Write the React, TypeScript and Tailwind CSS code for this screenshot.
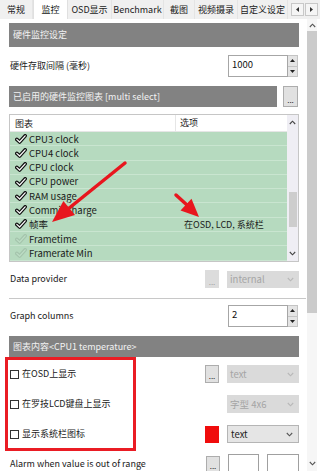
import React from "react";

const Chev = ({ dir = "down", className = "" }: { dir?: "up" | "down"; className?: string }) => (
  <svg width="7" height="5" viewBox="0 0 7 5" className={className}>
    <polyline
      points={dir === "down" ? "0.8,1 3.5,3.8 6.2,1" : "0.8,4 3.5,1.2 6.2,4"}
      fill="none"
      stroke="currentColor"
      strokeWidth="1.1"
    />
  </svg>
);

const Tri = ({ up }: { up?: boolean }) => (
  <svg width="5" height="3" viewBox="0 0 5 3">
    <polygon points={up ? "0,3 2.5,0 5,3" : "0,0 2.5,3 5,0"} fill="#222" />
  </svg>
);

const Check = ({ faint }: { faint?: boolean }) => (
  <svg width="12" height="10" viewBox="0 0 12 10" className={faint ? "opacity-10" : ""}>
    <path d="M1.8 5.4 L4.6 8 L10.2 1.8" fill="none" stroke="#111" strokeWidth="3.6" strokeLinecap="round" strokeLinejoin="round" />
    <path d="M1.8 5.4 L4.6 8 L10.2 1.8" fill="none" stroke="#fff" strokeWidth="1.2" strokeLinecap="round" strokeLinejoin="round" />
  </svg>
);

const Spin = ({ value }: { value: string }) => (
  <div className="flex h-[22px] mr-[1px]">
    <div className="w-[60px] border border-[#a6a6a6] bg-white pl-[3px] pt-[2px] text-[9.5px] leading-[12px] text-[#111]">{value}</div>
    <div className="flex w-[10px] flex-col">
      <div className="flex flex-1 items-center justify-center border border-l-0 border-[#c4c4c4] bg-[#e4e4e4]">
        <Tri up />
      </div>
      <div className="flex flex-1 items-center justify-center border border-l-0 border-t-0 border-[#c4c4c4] bg-[#e4e4e4]">
        <Tri />
      </div>
    </div>
  </div>
);

const Header = ({ children, className = "" }: { children: React.ReactNode; className?: string }) => (
  <div className={`flex items-center bg-[#828282] pl-[4px] text-[9px] text-[#f2f2f2] ${className}`}>{children}</div>
);

const Dots = ({ disabled, className = "" }: { disabled?: boolean; className?: string }) => (
  <div
    className={`flex w-[14px] items-end justify-center pb-[3px] text-[8px] leading-[6px] ${
      disabled ? "bg-[#dcdcdc] text-[#a0a0a0]" : "border border-[#adadad] bg-[#e1e1e1] text-[#222]"
    } ${className}`}
  >
    ...
  </div>
);

const Select = ({ text, disabled, className = "" }: { text: string; disabled?: boolean; className?: string }) => (
  <div
    className={`flex w-[72px] items-center justify-between pl-[3px] pr-[5px] text-[9.5px] ${
      disabled ? "bg-[#dadada] text-[#a5a5a5]" : "border border-[#b5b5b5] bg-[#e5e5e5] text-[#222]"
    } ${className}`}
  >
    <span>{text}</span>
    <Chev className={disabled ? "text-[#b8b8b8]" : "text-[#555]"} />
  </div>
);

const rows: { name: string; checked: boolean; opt?: string }[] = [
  { name: "CPU3 clock", checked: true },
  { name: "CPU4 clock", checked: true },
  { name: "CPU clock", checked: true },
  { name: "CPU power", checked: true },
  { name: "RAM usage", checked: true },
  { name: "Commit charge", checked: true },
  { name: "帧率", checked: true, opt: "在OSD, LCD, 系统栏" },
  { name: "Frametime", checked: false },
  { name: "Framerate Min", checked: false },
];

const tabs: { label: string; w: string; active?: boolean }[] = [
  { label: "常规", w: "w-[33px]" },
  { label: "监控", w: "w-[35px]", active: true },
  { label: "OSD显示", w: "w-[44px]" },
  { label: "Benchmark", w: "w-[52px]" },
  { label: "截图", w: "w-[31px]" },
  { label: "视频摄录", w: "w-[43px]" },
  { label: "自定义设定", w: "w-[50px]" },
];

const Cb = () => <div className="h-[9px] w-[9px] border border-[#333] bg-white" />;

export default function App() {
  return (
    <div className="relative h-[471px] w-[320px] overflow-hidden bg-white font-['Noto_Sans_CJK_SC','Noto_Sans',sans-serif] text-[#1a1a1a]">
      {/* Tab bar */}
      <div className="flex h-[19px] bg-[#f0f0f0]">
        {tabs.map((t) => (
          <div
            key={t.label}
            className={`flex ${t.w} items-center justify-center text-[9px] ${
              t.active ? "border-x border-[#e0e0e0] bg-white text-[#111]" : "border-r border-[#e4e4e4] text-[#222]"
            }`}
          >
            {t.label}
          </div>
        ))}
        <div className="ml-[3px] mt-[3px] flex h-[13px] gap-[1px]">
          <div className="flex w-[13px] items-center justify-center border border-[#c8c8c8] bg-[#f5f5f5]">
            <svg width="3" height="5" viewBox="0 0 3 5"><polygon points="3,0 0,2.5 3,5" fill="#333" /></svg>
          </div>
          <div className="flex w-[13px] items-center justify-center border border-[#c8c8c8] bg-[#f5f5f5]">
            <svg width="3" height="5" viewBox="0 0 3 5"><polygon points="0,0 3,2.5 0,5" fill="#333" /></svg>
          </div>
        </div>
      </div>

      {/* Body */}
      <div className="flex">
        <div className="w-[307px] pl-[9px] pr-[8px] pt-[4px]">
          <Header className="h-[24px]">硬件监控设定</Header>

          <div className="mt-[8px] flex items-center justify-between">
            <span className="pl-[1px] text-[9px]">硬件存取间隔 (毫秒)</span>
            <Spin value="1000" />
          </div>

          <div className="mt-[9px] flex h-[21px] gap-[6px]">
            <Header className="h-full flex-1">已启用的硬件监控图表 [multi select]</Header>
            <Dots className="mr-[1px] w-[15px]" />
          </div>

          {/* List */}
          <div className="mt-[7px] flex h-[148px] border border-[#c6c6c6]">
            <div className="flex flex-1 flex-col">
              <div className="flex h-[17px] shrink-0 items-center border-b border-[#e6e6e6] bg-white text-[9px]">
                <div className="w-[166px] border-r border-[#e6e6e6] pl-[5px] leading-[17px]">图表</div>
                <div className="pl-[4px]">选项</div>
              </div>
              <div className="flex flex-1 flex-col bg-[#b6dabf]">
                {rows.map((r) => (
                  <div key={r.name} className="flex h-[14.3px] items-center border-b border-[#c9e5d0] text-[9.5px]">
                    <div className="flex w-[19px] justify-center pl-[2px]">
                      <Check faint={!r.checked} />
                    </div>
                    <div className="w-[155px] text-[#1a1a1a]">{r.name}</div>
                    {r.opt && <div className="text-[9px]">{r.opt}</div>}
                  </div>
                ))}
              </div>
            </div>
            <div className="flex w-[11px] flex-col items-center bg-[#efeef4]">
              <Chev dir="up" className="mt-[5px] text-[#444]" />
              <div className="mt-[67px] h-[35px] w-[8px] bg-[#cdcdcd]" />
              <Chev className="mt-[24px] text-[#444]" />
            </div>
          </div>

          <div className="mt-[8px] flex h-[18px] items-center">
            <span className="flex-1 pl-[1px] text-[9px]">Data provider</span>
            <Dots disabled className="h-full" />
            <Select text="internal" disabled className="ml-[8px] h-[17px]" />
          </div>

          <div className="mt-[10px] h-px w-[297px] bg-[#c8c8c8]" />

          <div className="mt-[6px] flex items-center justify-between">
            <span className="pl-[1px] text-[9px]">Graph columns</span>
            <Spin value="2" />
          </div>

          <Header className="mt-[9px] h-[21px]">图表内容&lt;CPU1 temperature&gt;</Header>

          <div className="mt-[2px] flex h-[30px] items-center">
            <div className="flex flex-1 items-center gap-[3px] pl-[1px] text-[9px]">
              <Cb />
              在OSD上显示
            </div>
            <Dots className="h-[18px]" />
            <Select text="text" disabled className="ml-[8px] h-[18px]" />
          </div>
          <div className="flex h-[30px] items-center">
            <div className="flex flex-1 items-center gap-[3px] pl-[1px] text-[9px]">
              <Cb />
              在罗技LCD键盘上显示
            </div>
            <Select text="字型 4x6" disabled className="h-[18px]" />
          </div>
          <div className="flex h-[30px] items-center">
            <div className="flex flex-1 items-center gap-[3px] pl-[1px] text-[9px]">
              <Cb />
              显示系统栏图标
            </div>
            <div className="h-[17px] w-[14px] bg-[#f00c0c]" />
            <Select text="text" className="ml-[8px] h-[18px]" />
          </div>
          <div className="flex h-[30px] items-center">
            <span className="flex-1 pl-[1px] text-[9px]">Alarm when value is out of range</span>
            <Dots className="h-[17px]" />
            <div className="ml-[8px] h-[20px] w-[31px] border border-[#a0a0a0] bg-white" />
            <div className="ml-[8px] h-[20px] w-[32px] border border-[#a0a0a0] bg-white" />
          </div>
        </div>

        {/* Main scrollbar */}
        <div className="flex h-[452px] w-[10px] flex-col items-center bg-[#f6f6f6]">
          <Chev dir="up" className="mt-[4px] text-[#555]" />
          <div className="mt-[3px] h-[282px] w-full bg-[#cbcbcb]" />
          <div className="flex-1" />
          <Chev className="mb-[5px] text-[#555]" />
        </div>
      </div>

      {/* Annotations */}
      <div className="absolute left-[5px] top-[357px] h-[94px] w-[131px] border-[3px] border-[#ea1c24]" />
      <svg className="absolute left-0 top-0" width="320" height="471" viewBox="0 0 320 471">
        <line x1="125" y1="163" x2="68" y2="209" stroke="#e8161e" strokeWidth="3.5" strokeLinecap="round" />
        <polygon points="52,222 75,215 63.4,201" fill="#e8161e" />
        <line x1="176" y1="195" x2="187" y2="205" stroke="#e8161e" strokeWidth="3.5" strokeLinecap="round" />
        <polygon points="199,217 180.5,210.4 191.5,198.8" fill="#e8161e" />
      </svg>
    </div>
  );
}
